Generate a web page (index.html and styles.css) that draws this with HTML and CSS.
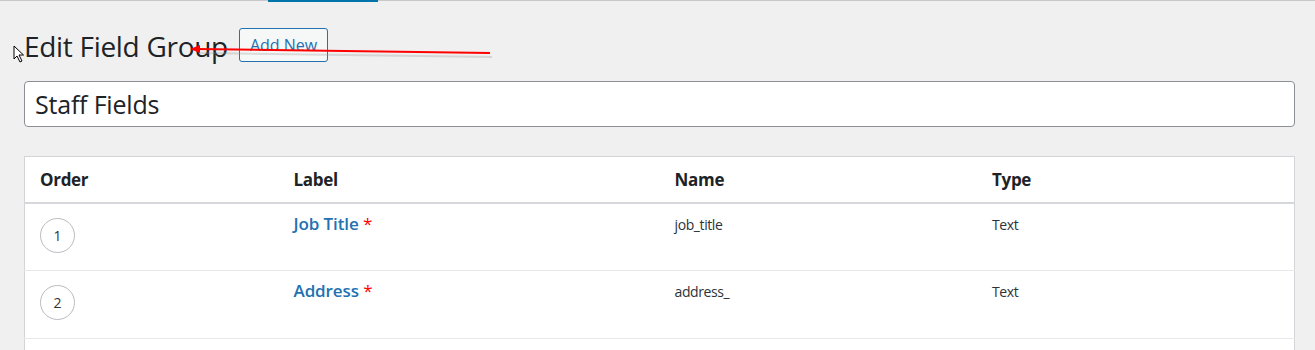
FILE: index.html
```html
<!DOCTYPE html>
<html lang="en">
<head>
    <meta charset="UTF-8">
    <meta name="viewport" content="width=device-width, initial-scale=1.0">
    <title>Edit Field Group</title>
    <link rel="stylesheet" href="styles.css">
</head>
<body>
    <div class="topbar"><span class="tab-active"></span></div>

    <div class="wrap">
        <div class="heading">
            <h1>Edit Field Group</h1>
            <a href="#" class="btn-add">Add New</a>
        </div>

        <input type="text" class="title-input" value="Staff Fields">

        <table class="fields">
            <thead>
                <tr>
                    <th class="col-order">Order</th>
                    <th class="col-label">Label</th>
                    <th class="col-name">Name</th>
                    <th class="col-type">Type</th>
                </tr>
            </thead>
            <tbody>
                <tr>
                    <td><span class="order-badge">1</span></td>
                    <td><a href="#" class="field-label">Job Title <span class="req">*</span></a></td>
                    <td class="plain">job_title</td>
                    <td class="plain">Text</td>
                </tr>
                <tr>
                    <td><span class="order-badge">2</span></td>
                    <td><a href="#" class="field-label">Address <span class="req">*</span></a></td>
                    <td class="plain">address_</td>
                    <td class="plain">Text</td>
                </tr>
                <tr class="empty-row"><td colspan="4"></td></tr>
            </tbody>
        </table>
    </div>

    <!-- annotation drawn on top of the screenshot -->
    <svg class="annot-arrow" width="320" height="24" viewBox="0 0 320 24">
        <line x1="12" y1="10" x2="305" y2="14" stroke="#999" stroke-width="2" opacity="0.3" transform="translate(1,2)"/>
        <line x1="10" y1="8" x2="304" y2="12" stroke="#f00" stroke-width="2"/>
        <polygon points="4,8 14,4 14,12" fill="#f00"/>
    </svg>

    <svg class="cursor" width="12" height="18" viewBox="0 0 12 18">
        <path d="M1 1 L1 14 L4 11 L7 17 L9 16 L6 10 L10.5 10 Z" fill="#fff" stroke="#000" stroke-width="1"/>
    </svg>
</body>
</html>
```

FILE: styles.css
```css
body { margin: 0; background-color: #f0f0f0; font-family: "Open Sans", "Noto Sans", sans-serif; color: #1d2327; }

.topbar { height: 1px; border-top: 1px solid #c8c8c8; position: relative; }
.tab-active { display: block; width: 110px; height: 2px; margin-left: 268px; margin-top: -1px; background-color: #0073aa; }

.wrap { padding: 0 20px 0 24px; }

.heading { display: flex; align-items: center; gap: 11px; padding-top: 26px; height: 36px; }
.heading h1 { margin: 0; font-size: 28px; font-weight: 400; line-height: 36px; color: #1d2327; letter-spacing: -0.3px; }
.btn-add {
    display: inline-block;
    margin-top: -2px;
    padding: 0 10px;
    height: 32px;
    line-height: 32px;
    border: 1px solid #2271b1;
    border-radius: 3px;
    background-color: #f6f7f7;
    color: #2271b1;
    font-size: 16px;
    text-decoration: none;
}

.title-input {
    display: block;
    box-sizing: border-box;
    width: 100%;
    height: 46px;
    margin-top: 17px;
    padding: 0 10px;
    border: 1px solid #8c8f94;
    border-radius: 4px;
    background: #fff;
    font-family: inherit;
    font-size: 25px;
    color: #1d2327;
    letter-spacing: -0.2px;
}

.fields {
    width: 100%;
    margin-top: 29px;
    border-collapse: collapse;
    background-color: #fff;
    border: 1px solid #d3d4d7;
    table-layout: fixed;
}
.fields th { box-sizing: border-box; text-align: left; font-size: 17px; font-weight: 700; height: 46px; padding: 0 15px; border-bottom: 2px solid #d6d7da; letter-spacing: -0.3px; }
.col-order { width: 20%; }
.col-label { width: 30%; }
.col-name { width: 25%; }
.col-type { width: 25%; }
.fields td { vertical-align: top; height: 68px; padding: 0 15px; border-bottom: 1px solid #e8e8e8; box-sizing: border-box; }
.fields tr.empty-row td { height: 12px; border-bottom: none; }

.order-badge {
    display: flex;
    align-items: center;
    justify-content: center;
    width: 33px;
    height: 33px;
    margin-top: 14px;
    border: 1px solid #b9bcc0;
    border-radius: 50%;
    font-size: 14px;
    color: #333;
}
.field-label { display: inline-block; margin-top: 8px; font-size: 17px; font-weight: 600; color: #2271b1; text-decoration: none; letter-spacing: -0.1px; }
.req { color: #f00; font-weight: 400; }
.plain { font-size: 14px; color: #2c3338; padding-top: 11px !important; letter-spacing: -0.4px; }

.annot-arrow { position: absolute; left: 186px; top: 41px; }
.cursor { position: absolute; left: 13px; top: 45px; }
```
